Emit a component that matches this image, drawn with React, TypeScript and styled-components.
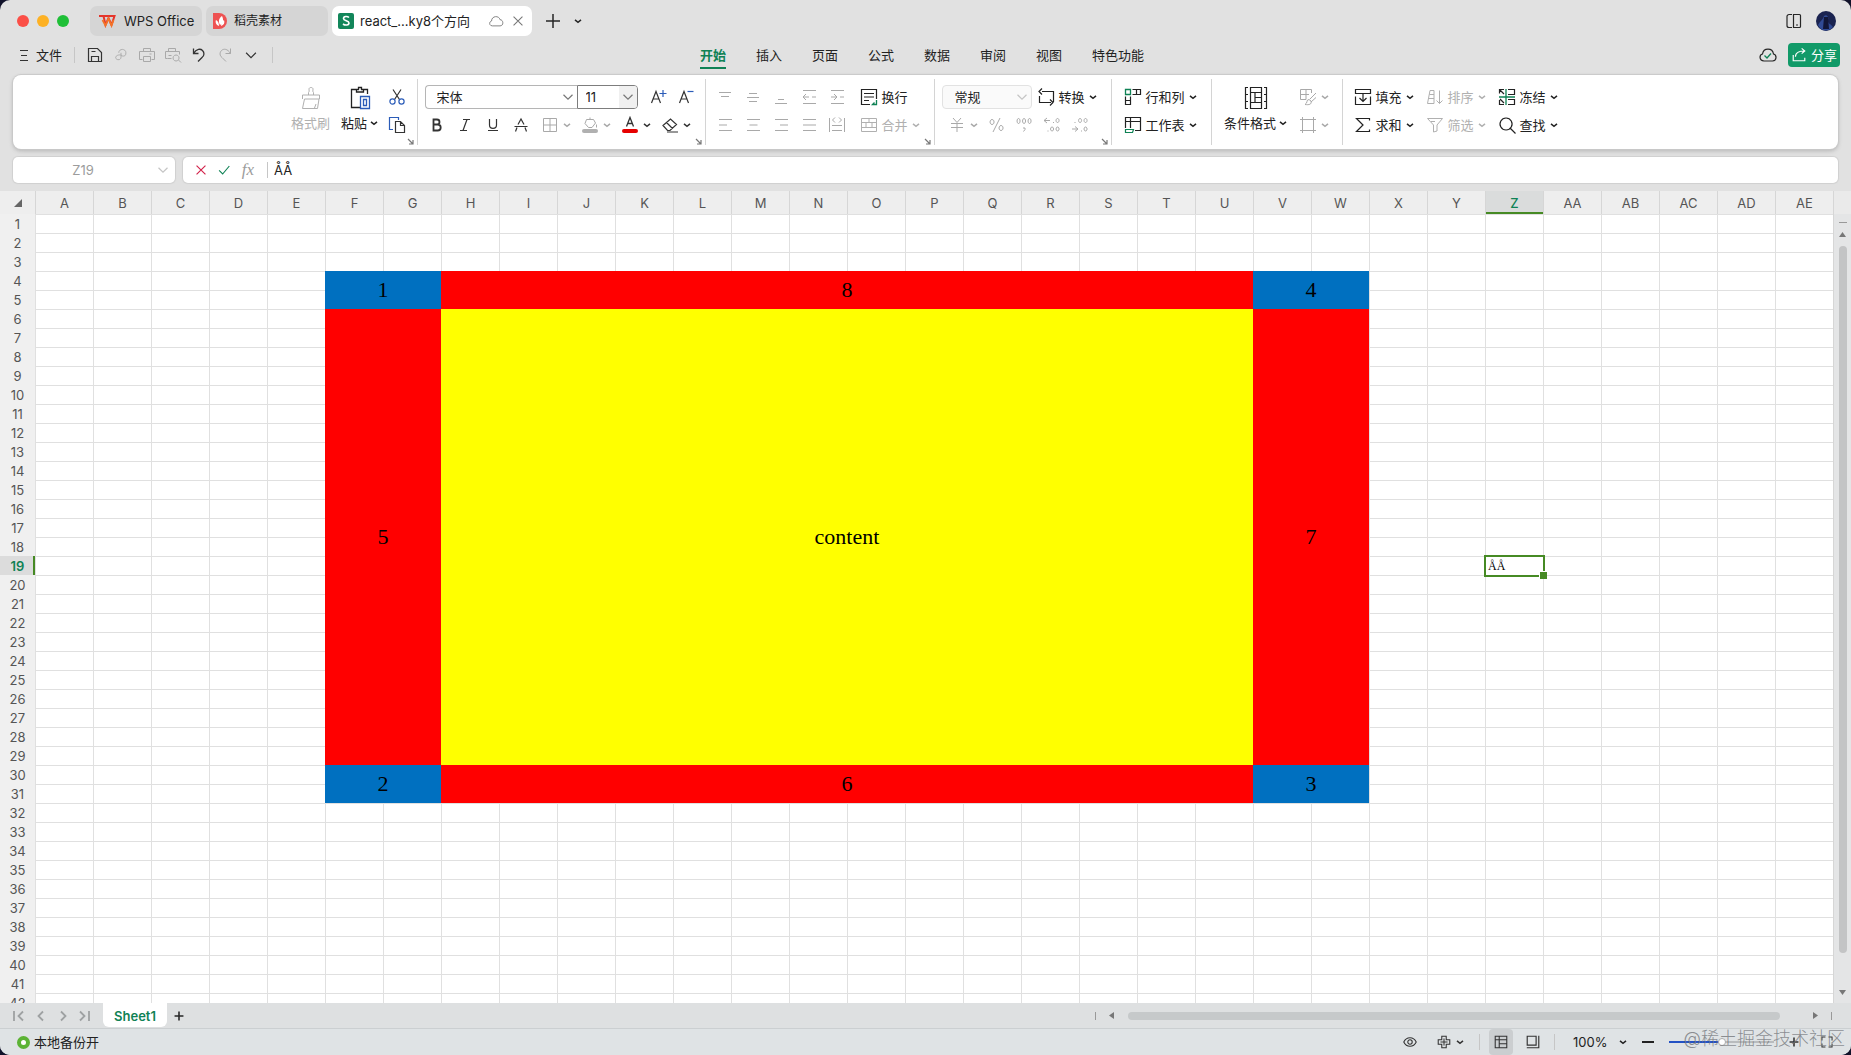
import React from "react";
import styled, { createGlobalStyle, css } from "styled-components";

const GlobalStyle = createGlobalStyle`
  * { box-sizing: border-box; }
  body {
    margin: 0;
    background: #11122a;
    color: #262626;
    font-family: Inter, "Noto Sans CJK SC", sans-serif;
    font-size: 13px;
    line-height: 18px;
  }
  button, input, select { font: inherit; color: inherit; margin: 0; }
  button { border: 0; padding: 0; background: none; }
`;

const green = "#0f8255";
const muted = "#a9a9a9";
const blue = "#2b5cb8";

/* ---------- icons ---------- */

const Svg = styled.svg<{ $size?: number }>`
  width: ${(p) => p.$size ?? 18}px;
  height: ${(p) => p.$size ?? 18}px;
  flex: none;
  fill: none;
  stroke: currentColor;
  stroke-width: 1;
`;

const shapes: Record<string, React.ReactNode> = {
  save: <path d="M2.5 2.5h9l4 4v9h-13zM5.5 15.5v-5h7v5M5.5 5.5h4" strokeWidth="1.2" />,
  link: <path d="M6.500 6.500c0-5 8-5 8 0s-3.500 3.500-5 3.500M10 9.500c-3-1.500-7 0-7 2.500s6 4 6-1V6.500" />,
  print: <path d="M5.500 5V2.500h7V5M4.500 13.500h-3v-8h15v8h-3M5.500 10.500h7v5h-7zM11.500 8h2" />,
  preview: <path d="M4.500 5V2.500h7V5M3.500 12.500h-2v-7h14v3M3.500 12.500h4M4.500 9.500h3M12 15a3 3 0 1 1 .1 0zM14.300 13.800l2.700 2.700" />,
  undo: <path d="M3.500 2.500v5h5M3.500 7.500c3-5 7-5 9-3s2 5-.5 7L8 15.500" strokeWidth="1.300" />,
  redo: <path d="M14.500 2.500v5h-5M14.500 7.500c-3-5-7-5-9-3s-2 5 .5 7L10 15.500" />,
  down: <path d="M3.500 6.500L9 12l5.500-5.500" strokeWidth="1.300" />,
  brush: <path d="M9.500 9V6.500c1-.5.500-2.500.500-3.500 0-2 4-2 4 0 0 1-.5 3 .5 3.500V9M3.500 13V9h17v4M5.500 13L3.500 22.500h15l1.500-9.500zM15.500 22l1.500-4" />,
  paste: (
    <>
      <path d="M8 3.500H3.500v18H12M15 3.500h4.500V8M8.500 6V3.500h2V1.500h3v2h2V6z" strokeWidth="1.300" />
      <path d="M12.500 10.500h9v12h-9zM15.500 13.500h3v6h-3z" stroke={blue} strokeWidth="1.300" />
    </>
  ),
  cut: (
    <>
      <path d="M5 1.500l6.800 10.500M13 1.500L6.200 12" strokeWidth="1.200" />
      <circle cx="4.500" cy="13.500" r="2.600" stroke={blue} strokeWidth="1.200" />
      <circle cx="13.500" cy="13.500" r="2.600" stroke={blue} strokeWidth="1.200" />
    </>
  ),
  copy: (
    <>
      <path d="M5 13.500H1.500v-12h9V4" stroke={blue} strokeWidth="1.200" />
      <path d="M7.500 5.500h5l4 4v7h-9zM12.500 5.500v4h4" strokeWidth="1.200" />
    </>
  ),
  grow: (
    <>
      <path d="M2.500 15L7 3.500 11.500 15M4 11h6" strokeWidth="1.200" />
      <path d="M14 2v7M10.500 5.500h7" stroke={blue} strokeWidth="1.200" />
    </>
  ),
  shrink: (
    <>
      <path d="M2.500 15L7 3.500 11.500 15M4 11h6" strokeWidth="1.200" />
      <path d="M10.500 3.500h6" stroke={blue} strokeWidth="1.200" />
    </>
  ),
  bold: <path d="M5.500 3.500v11h4.200a3 3 0 0 0 0-6H5.500 9a2.500 2.500 0 0 0 0-5z" strokeWidth="1.800" />,
  italic: <path d="M7 3.500h7M4 14.500h7M11 3.500l-4 11" strokeWidth="1.200" />,
  underline: <path d="M5.500 3v6c0 4.500 7 4.500 7 0V3M4 14.500h10" strokeWidth="1.200" />,
  strike: <path d="M6 8.500L9 3l3 5.500M2.500 10.500h13M5 11.500l-1.500 4M13 11.500l1.500 4" strokeWidth="1.200" />,
  border: <path d="M2.500 2.500h13v13h-13zM9 2.500v13M2.500 9h13" />,
  fill: (
    <>
      <path d="M5.500 3.500h7l2 3.500-3.500 4.500H7.500L4 7.500zM9 3.500V1.500M15.500 8.500v3" />
      <rect x="1" y="13" width="16" height="4" rx="2" fill="#b0b0b0" stroke="none" />
    </>
  ),
  color: (
    <>
      <path d="M5.500 10.500L9 1.500l3.500 9M6.800 7.500h4.400" strokeWidth="1.300" />
      <rect x="1" y="13" width="16" height="4" rx="2" fill="#e60000" stroke="none" />
    </>
  ),
  eraser: <path d="M2 9.500l7.500-6.500 6 5.500-6.500 6H6.500zM5.500 6.500l6 6M6 16h11" strokeWidth="1.200" />,
  top: <path d="M3 4.500h12M5 8.500h8" />,
  middle: <path d="M5 5.500h8M3 9.500h12M5 13.500h8" />,
  bottom: <path d="M6 11.500h6M3 15.500h12" />,
  outdent: <path d="M3 2.500h13M3 15.500h13M3 9h6M6 6L3 9l3 3M12 9h4" />,
  indent: <path d="M3 2.500h13M3 15.500h13M3 9h6M6 6l3 3-3 3M12 9h4" />,
  left: <path d="M3 3.500h13M3 9h8M3 14.500h13" />,
  center: <path d="M3 3.500h13M5.500 9h8M3 14.500h13" />,
  right: <path d="M3 3.500h13M8 9h8M3 14.500h13" />,
  justify: <path d="M3 3.500h13M3 9h13M3 14.500h13" />,
  spread: <path d="M1.500 2v14M16.500 2v14M4 9.500h10M4 14.500h10M7 1.500L4.500 4 7 6.500M11 1.500L13.500 4 11 6.500" />,
  wrap: (
    <>
      <path d="M10 16.500H1.500v-15h15V11M4 5.500h10M4 9h10M4 12.500h5" strokeWidth="1.200" />
      <path d="M16.500 12v4.500h-4l2-2" stroke={green} strokeWidth="1.300" />
    </>
  ),
  merge: <path d="M1.500 2.500h15v13h-15zM1.500 6.500h15M9 2.500v4M6 6.500v5M12 6.500v5M1.500 11.500h15" />,
  convert: <path d="M5 3.500h11.500V14M5 .5l-3 3 3 3M14 14.500H2.500V8M13 11.500l3 3-3 3" strokeWidth="1.200" />,
  yen: <path d="M5 2l4 4.500L13 2M3 7.500h12M3 11.500h12M9 7v9" />,
  percent: <path d="M13 2L6 16M5 3.500a2 2.500 0 1 0 .1 0zM14 9.500a2 2.500 0 1 0 .1 0z" />,
  comma: <path d="M3.500 2.500a1.500 2.500 0 1 0 .1 0zM9 2.500a1.500 2.500 0 1 0 .1 0zM14.500 2.500a1.500 2.500 0 1 0 .1 0zM8 12h2v1.500L8.500 15.500" />,
  moreDec: <path d="M1 4.500h6M4 2L1 4.500 4 7M10 6.500h1M14.500 2.500a1.500 2 0 1 0 .1 0zM4.500 15h1M9 11a1.500 2 0 1 0 .1 0zM14.500 11a1.500 2 0 1 0 .1 0z" />,
  lessDec: <path d="M3.500 6.500h1M9 2.500a1.500 2 0 1 0 .1 0zM14.500 2.500a1.500 2 0 1 0 .1 0zM1 13h6M4 10.500L7 13l-3 2.500M10 15h1M14.500 11a1.500 2 0 1 0 .1 0z" />,
  rows: (
    <>
      <path d="M8.500 1.500h8v5h-8M12.500 1.500v5M1.500 8.500v8h5v-8M1.500 12.500h5" strokeWidth="1.200" />
      <path d="M1.500 1.500h5v5h-5z" stroke={green} strokeWidth="1.300" />
    </>
  ),
  sheet: (
    <>
      <path d="M1.500 12V1.500h15v13H11M1.500 5.500h15M6.500 1.500V12" strokeWidth="1.200" />
      <path d="M1.500 13.500h8l-1 3h-7z" stroke={green} strokeWidth="1.200" />
    </>
  ),
  cond: <path d="M4 1.500H1.500v21H4M20 1.500h2.500v21H20M1.500 8.500H4M1.500 15.500H4M20 8.500h2.500M20 15.500h2.500M6.500 1.500h11v5h-11zM6.500 6.500v10h11v-10M6.500 16.500v6h11v-6M11 6.500v10M11 11.500h6.500" strokeWidth="1.200" />,
  style: <path d="M7 11.500H1.500v-10h11V5M1.500 6.500H10M7 1.500v10M17 5l-6 6M17 9.500L12 14M10 11.500c-3 0-1 3.500-4 5 4 .5 7 0 6-3.500z" />,
  frame: <path d="M3.500 1v16M14.500 1v16M1 3.500h16M1 14.500h16" />,
  fillDown: <path d="M1.500 1.500h15v4h-15zM1.500 8.500v8h15v-8M9 5.500v8M5.500 10L9 13.500l3.500-3.500" strokeWidth="1.200" />,
  sum: <path d="M15.500 4.500v-2H2.500L9 9l-6.500 6.500h13v-2" strokeWidth="1.200" />,
  sort: <path d="M1.500 15.500L4 2.500h4v13zM3 10.500h5M3.500 6.500H8M13.500 2.500v13M10.500 12.500l3 3 3-3" />,
  filter: <path d="M1.500 2.500h15L11 9v6l-3.500 1V9zM5 5.500h4" />,
  freeze: (
    <>
      <path d="M6 1.500H1.500v4M1.500 12v4.500H6M10 1.500h6.500v5H10M10 11.500h6.500v5H10M2 2l4 4M2 11l4 4" strokeWidth="1.200" />
      <path d="M8 1v16M1 9h16" stroke={green} strokeWidth="1.300" />
    </>
  ),
  search: <path d="M8 2a6 6 0 1 0 .1 0zM12.500 12.500l5 5" strokeWidth="1.200" />,
  cloud: <path d="M5 14.500c-4 0-4-5-1-5.500 0-6 8.500-6.500 9.500-1.500 4 0 4.500 7 0 7z" />,
  close: <path d="M4 4l10 10M14 4L4 14" strokeWidth="1.200" />,
  plus: <path d="M9 2v14M2 9h14" strokeWidth="1.500" />,
  plusBold: <path d="M9 1v16M1 9h16" strokeWidth="2.800" />,
  cloudOk: (
    <>
      <path d="M5 15c-5-.5-5-6-1.500-7 1-6.500 10-6.500 11 0 3.500 1 3.500 6.500-1 7z" strokeWidth="1.200" />
      <path d="M5.500 9.500L8 12l4-4.500" stroke={green} strokeWidth="1.300" />
    </>
  ),
  share: <path d="M2.500 9v6.500h13V12M5 11c0-5 5-6.500 10-6.500M12 1.500l3.500 3-3.500 3" strokeWidth="1.300" />,
  panel: <path d="M7 2.500H4a2 2 0 0 0-2 2v9a2 2 0 0 0 2 2h3M8.500 2.500h6a1 1 0 0 1 1 1v11a1 1 0 0 1-1 1h-6zM11 13h2" strokeWidth="1.200" />,
  check: <path d="M3.500 9.500l4 4 7.500-9" stroke={green} strokeWidth="1.300" />,
  cancel: <path d="M4 4l10 10M14 4L4 14" stroke="#d2224a" strokeWidth="1.300" />,
  launch: <path d="M2 2l5 5M7 3v4H3" strokeWidth="1.200" />,
  eye: (
    <>
      <path d="M2 9c3-6.500 11-6.500 14 0-3 6.500-11 6.500-14 0z" strokeWidth="1.200" />
      <circle cx="9" cy="9" r="2.500" strokeWidth="1.200" />
    </>
  ),
  move: <path d="M6.500 6.500v-4h5v4h4v5h-4v4h-5v-4h-4v-5zM9 5v8M5 9h8" strokeWidth="1.200" />,
  normal: <path d="M2.500 2.500h13v13h-13zM2.500 6.500h13M7 2.500v13M7 11h8.500" strokeWidth="1.200" />,
  page: <path d="M2.500 2.500h10v10h-10zM15.500 2v13.500H2" strokeWidth="1.300" />,
  expand: <path d="M2.500 7V2.500H7M11 15.500h4.500V11M15.500 7V2.500H11M2.500 11v4.500H7" strokeWidth="1.300" />,
  first: <path d="M4 4v10M13 4.500L8.500 9l4.500 4.500" strokeWidth="1.800" />,
  prev: <path d="M11 4.500L6.500 9l4.500 4.500" strokeWidth="1.800" />,
  next: <path d="M7 4.500L11.500 9 7 13.500" strokeWidth="1.800" />,
  last: <path d="M4 4.500L8.500 9 4 13.500M13 4v10" strokeWidth="1.800" />,
};

function Icon({ name, size = 18, box = 18 }: { name: string; size?: number; box?: number }) {
  return (
    <Svg $size={size} viewBox={`0 0 ${box} ${box}`} aria-hidden="true">
      {shapes[name]}
    </Svg>
  );
}

function Caret({ wide }: { wide?: boolean }) {
  return (
    <Svg $size={wide ? 12 : 8} viewBox="0 0 8 8" aria-hidden="true">
      <path d={wide ? "M1 2.500L4 5.500l3-3" : "M1 2.800L4 5.300l3-2.500"} strokeWidth={wide ? 0.8 : 1.5} />
    </Svg>
  );
}

/* ---------- window ---------- */

const Window = styled.div`
  display: flex;
  flex-direction: column;
  height: 100vh;
  overflow: hidden;
  border-radius: 10px;
  background: #e1e1e1;
`;

const TitleBar = styled.header`
  display: flex;
  align-items: center;
  height: 36px;
  padding: 6px 15px 0 17px;
`;

const Lights = styled.div`
  display: flex;
  gap: 8px;
  width: 73px;
`;

const Light = styled.span<{ $color: string }>`
  width: 12px;
  height: 12px;
  border-radius: 50%;
  background: ${(p) => p.$color};
`;

const DocTabs = styled.nav`
  display: flex;
  flex: 1;
  align-items: center;
  gap: 4px;
`;

const DocTab = styled.button<{ $active?: boolean; $small?: boolean; $width: number }>`
  display: flex;
  align-items: center;
  gap: 6px;
  width: ${(p) => p.$width}px;
  height: 30px;
  padding: 0 6px;
  border-radius: 7px;
  background: ${(p) => (p.$active ? "#fff" : "#d5d5d5")};
  white-space: nowrap;
  font-size: ${(p) => (p.$small ? 12 : 13)}px;
  color: #222;
`;

const TabTools = styled.span`
  display: flex;
  flex: 1;
  justify-content: flex-end;
  gap: 6px;
  color: #777;
`;

const PlainButton = styled.button<{ $width?: number }>`
  display: flex;
  align-items: center;
  justify-content: center;
  gap: 4px;
  width: ${(p) => p.$width ?? 26}px;
  height: 26px;
`;

const Avatar = styled.svg`
  width: 20px;
  height: 20px;
  margin-left: 13px;
`;

const MenuBar = styled.div`
  display: grid;
  grid-template-columns: 1fr auto 1fr;
  align-items: center;
  height: 39px;
  padding: 0 11px 2px 4px;
`;

const QuickTools = styled.div`
  display: flex;
  align-items: center;
  color: #333;
`;

const FileButton = styled.button`
  display: flex;
  align-items: center;
  gap: 8px;
  height: 26px;
  padding: 0 12px 0 16px;
  color: #222;
`;

const Rule = styled.span<{ $gap?: number }>`
  width: 1px;
  height: 16px;
  margin: 0 ${(p) => p.$gap ?? 8}px;
  background: #c6c6c6;
`;

const QuickSet = styled.div`
  display: flex;
  padding: 0 8px 0 7px;
`;

const QuickButton = styled(PlainButton)<{ $off?: boolean }>`
  color: ${(p) => (p.$off ? muted : "#333")};
`;

const MenuTabs = styled.nav`
  display: flex;
  gap: 30px;
`;

const MenuTab = styled.button<{ $active?: boolean }>`
  height: 28px;
  color: #222;
  ${(p) =>
    p.$active &&
    css`
      color: ${green};
      font-weight: 700;
      box-shadow: inset 0 -2px ${green};
    `}
`;

const MenuEnd = styled.div`
  display: flex;
  align-items: center;
  justify-content: flex-end;
  gap: 11px;
`;

const ShareButton = styled.button`
  display: flex;
  align-items: center;
  gap: 4px;
  height: 24px;
  padding: 0 3px;
  border-radius: 4px;
  background: #119a68;
  color: #fff;
`;

/* ---------- ribbon ---------- */

const Ribbon = styled.section`
  display: flex;
  justify-content: center;
  height: 74px;
  margin: 0 13px;
  padding: 4px 0;
  border-radius: 8px;
  background: #fff;
  box-shadow: 0 0 1px 1px #c9c9c9, 0 2px 4px #b5b5b5;
`;

const Group = styled.div<{ $width: number; $pad: number; $last?: boolean }>`
  position: relative;
  display: flex;
  flex: none;
  width: ${(p) => p.$width}px;
  padding-left: ${(p) => p.$pad}px;
  border-right: ${(p) => (p.$last ? "0" : "1px solid #d4d4d4")};
`;

const Launcher = styled.button`
  position: absolute;
  right: 3px;
  bottom: 0;
  display: flex;
  color: #777;
`;

const Stack = styled.div<{ $indent?: number }>`
  display: flex;
  flex-direction: column;
  padding: 4px 0 0 ${(p) => p.$indent ?? 0}px;
`;

const Row = styled.div<{ $gap?: number; $indent?: number }>`
  display: flex;
  align-items: center;
  gap: ${(p) => p.$gap ?? 0}px;
  height: 28px;
  padding-left: ${(p) => p.$indent ?? 0}px;
`;

const Tool = styled.button<{ $off?: boolean; $menu?: boolean }>`
  display: flex;
  align-items: center;
  justify-content: ${(p) => (p.$menu ? "flex-start" : "center")};
  gap: 4px;
  width: ${(p) => (p.$menu ? 40 : 28)}px;
  height: 28px;
  padding-left: ${(p) => (p.$menu ? 6 : 0)}px;
  color: ${(p) => (p.$off ? muted : "#333")};
`;

const LabelTool = styled.button<{ $off?: boolean }>`
  display: flex;
  align-items: center;
  gap: 4px;
  height: 28px;
  white-space: nowrap;
  color: ${(p) => (p.$off ? "#b0b0b0" : "#222")};
`;

const BigTool = styled.button<{ $off?: boolean; $width: number }>`
  display: flex;
  flex-direction: column;
  align-items: center;
  gap: 4px;
  width: ${(p) => p.$width}px;
  padding-top: 7px;
  color: ${(p) => (p.$off ? "#b0b0b0" : "#222")};
  & + & { margin-left: 7px; }
`;

const BigLabel = styled.span`
  display: flex;
  align-items: center;
  gap: 3px;
  white-space: nowrap;
`;

const Field = styled.label<{ $width: number; $kind?: "font" | "size" | "format" }>`
  display: flex;
  align-items: center;
  width: ${(p) => p.$width}px;
  height: 24px;
  border: 1px solid #b5b5b5;
  border-radius: 4px;
  overflow: hidden;
  color: #777;
  ${(p) => p.$kind === "font" && css`border-radius: 4px 0 0 4px;border-right: 0;`}
  ${(p) => p.$kind === "size" && css`border-color: #7d7d7d;border-radius: 0 4px 4px 0;`}
  ${(p) => p.$kind === "format" && css`border-color: #e2e2e2;background: #fafafa;color: #c5c5c5;`}
`;

const Select = styled.select<{ $pad: number }>`
  appearance: none;
  flex: 1;
  min-width: 0;
  height: 22px;
  padding: 0 0 0 ${(p) => p.$pad}px;
  border: 0;
  background: none;
  color: #222;
`;

const CaretBox = styled.span<{ $shade?: boolean }>`
  display: flex;
  align-items: center;
  justify-content: center;
  width: 18px;
  height: 22px;
  background: ${(p) => (p.$shade ? "#f0f0f0" : "transparent")};
`;

/* ---------- formula bar ---------- */

const FormulaRow = styled.div`
  display: flex;
  gap: 8px;
  height: 26px;
  margin: 8px 13px;
`;

const Box = styled.div<{ $width?: number }>`
  display: flex;
  align-items: center;
  ${(p) => (p.$width ? css`width: ${p.$width}px;` : css`flex: 1;`)}
  padding: 0 6px;
  border-radius: 5px;
  background: #fff;
  box-shadow: 0 0 1px 1px #d0d0d0;
  color: #c5c5c5;
`;

const BoxInput = styled.input<{ $center?: boolean }>`
  flex: 1;
  min-width: 0;
  padding: 0 ${(p) => (p.$center ? 10 : 0)}px 0 0;
  border: 0;
  outline: 0;
  background: none;
  text-align: ${(p) => (p.$center ? "center" : "left")};
  color: ${(p) => (p.$center ? "#9c9c9c" : "#222")};
`;

const Fx = styled.button`
  width: 26px;
  font: italic 17px/20px "Liberation Serif", serif;
  color: #9c9c9c;
`;

/* ---------- grid ---------- */

const SheetArea = styled.main`
  display: flex;
  flex: 1;
  min-height: 0;
  background: #fff;
`;

const GridView = styled.div`
  flex: 1;
  min-width: 0;
  overflow: hidden;
`;

const Grid = styled.table`
  width: 100%;
  table-layout: fixed;
  border-collapse: separate;
  border-spacing: 0;
`;

const Col = styled.col<{ $width: number }>`
  width: ${(p) => p.$width}px;
`;

const ColHead = styled.th<{ $active?: boolean }>`
  height: 23px;
  padding: 0;
  border-left: 1px solid #d6d6d6;
  background: #eeeeee;
  font-weight: 400;
  color: #555;
  ${(p) =>
    p.$active &&
    css`
      background: #dadcdc;
      color: ${green};
      font-weight: 500;
      box-shadow: inset 0 -2px #468a24;
    `}
`;

const Corner = styled.th`
  height: 23px;
  padding: 0 0 0 14px;
  background: #eeeeee;
  text-align: left;
  line-height: 0;
`;

const RowHead = styled.th<{ $active?: boolean }>`
  height: 19px;
  padding: 0;
  background: #f0f0f0;
  font-weight: 400;
  line-height: 18px;
  color: #555;
  ${(p) =>
    p.$active &&
    css`
      background: #dcdcdc;
      color: ${green};
      font-weight: 600;
      box-shadow: inset -2px 0 #468a24;
    `}
`;

const Cell = styled.td`
  height: 19px;
  padding: 0;
  border-top: 1px solid #e0e0e0;
  border-left: 1px solid #e0e0e0;
`;

const Block = styled.td<{ $color: string }>`
  padding: 0;
  background: ${(p) => p.$color};
  font: 22px/24px "Liberation Serif", serif;
  text-align: center;
  color: #000;
`;

const ActiveCell = styled(Cell)`
  position: relative;
  padding-left: 2px;
  font: 12px/14px "Liberation Serif", serif;
  color: #000;
  &::before {
    content: "";
    position: absolute;
    inset: -2px;
    border: 2px solid #468a24;
  }
  &::after {
    content: "";
    position: absolute;
    right: -4px;
    bottom: -4px;
    width: 7px;
    height: 7px;
    border: solid #fff;
    border-width: 1px 0 0 1px;
    background: #468a24;
  }
`;

const VScroll = styled.div`
  display: flex;
  flex-direction: column;
  align-items: center;
  width: 18px;
  padding: 31px 0 3px;
  border-left: 1px solid #d6d6d6;
  background: linear-gradient(#eaeaea 23px, #e4e5e6 23px);
  color: #777;
`;

const VThumb = styled.span`
  flex: 1;
  width: 8px;
  margin: 4px 0 31px;
  border-radius: 4px;
  background: #c3c4c5;
`;

const Dash = styled.span<{ $vertical?: boolean }>`
  width: ${(p) => (p.$vertical ? 1 : 8)}px;
  height: ${(p) => (p.$vertical ? 8 : 1)}px;
  background: #999;
`;

const Minus = styled.span`
  width: 12px;
  height: 2px;
  background: #222;
`;

const ArrowButton = styled.button`
  display: flex;
  align-items: center;
  justify-content: center;
  width: 16px;
  height: 16px;
  color: #777;
  ${Dash} + & { margin-top: 3px; }
`;

const SideArrow = styled(ArrowButton)`
  && { margin-top: 0; }
`;

/* ---------- footer ---------- */

const SheetBar = styled.div`
  display: flex;
  align-items: center;
  height: 26px;
  background: #dee0e1;
  border-bottom: 1px solid #cbcfd1;
`;

const SheetNav = styled.div`
  display: flex;
  gap: 4px;
  padding: 0 9px 0 10px;
  color: #9ea1a2;
`;

const SheetTab = styled.button`
  align-self: flex-start;
  width: 64px;
  height: 24px;
  padding-top: 2px;
  border-radius: 0 0 6px 6px;
  background: #fff;
  font-weight: 600;
  color: ${green};
`;

const SheetSpacer = styled.div`
  flex: 38;
`;

const HScroll = styled.div`
  display: flex;
  flex: 31;
  align-items: center;
  gap: 8px;
  padding-right: 19px;
`;

const HThumb = styled.span`
  flex: 1;
  height: 8px;
  margin-right: 19px;
  border-radius: 4px;
  background: #c6c9ca;
`;

const StatusBar = styled.footer`
  display: flex;
  align-items: center;
  justify-content: space-between;
  height: 26px;
  padding: 0 11px 0 17px;
  background: #dfe3e5;
  color: #222;
`;

const StatusPart = styled.div<{ $gap: number }>`
  display: flex;
  align-items: center;
  gap: ${(p) => p.$gap}px;
  height: 26px;
`;

const BackupDot = styled.span`
  width: 13px;
  height: 13px;
  border: 4px solid #5cb335;
  border-radius: 50%;
  background: #fff;
`;

const ViewButton = styled(PlainButton)<{ $on?: boolean }>`
  border-radius: 4px;
  color: #333;
  background: ${(p) => (p.$on ? "#cbced0" : "transparent")};
`;

const ZoomLabel = styled.label`
  display: flex;
  align-items: center;
  width: 64px;
`;

const ZoomRange = styled.input`
  appearance: none;
  width: 105px;
  height: 8px;
  background: linear-gradient(90deg, #2351c4 50%, #b9bcbe 50%) center / 100% 2px no-repeat;
  &::-webkit-slider-thumb {
    appearance: none;
    width: 8px;
    height: 8px;
    border: 1px solid #aaa;
    border-radius: 50%;
    background: #fff;
  }
`;

const Watermark = styled.div`
  position: absolute;
  right: 6px;
  bottom: 4px;
  font-size: 18px;
  font-weight: 300;
  line-height: 24px;
  color: rgba(115, 118, 122, 0.8);
  pointer-events: none;
`;

/* ---------- data ---------- */

const COLUMNS = Array.from({ length: 31 }, (_, i) =>
  i < 26 ? String.fromCharCode(65 + i) : "A" + String.fromCharCode(39 + i),
);
const ROWS = Array.from({ length: 42 }, (_, i) => i + 1);
const MENUS = ["开始", "插入", "页面", "公式", "数据", "审阅", "视图", "特色功能"];

const BLUE = "#0070c0";
const RED = "#ff0000";
const YELLOW = "#ffff00";

type Merge = { row: number; col: number; rows: number; cols: number; color: string; text: string };

const MERGES: Merge[] = [
  { row: 4, col: 5, rows: 2, cols: 2, color: BLUE, text: "1" },
  { row: 4, col: 7, rows: 2, cols: 14, color: RED, text: "8" },
  { row: 4, col: 21, rows: 2, cols: 2, color: BLUE, text: "4" },
  { row: 6, col: 5, rows: 24, cols: 2, color: RED, text: "5" },
  { row: 6, col: 7, rows: 24, cols: 14, color: YELLOW, text: "content" },
  { row: 6, col: 21, rows: 24, cols: 2, color: RED, text: "7" },
  { row: 30, col: 5, rows: 2, cols: 2, color: BLUE, text: "2" },
  { row: 30, col: 7, rows: 2, cols: 14, color: RED, text: "6" },
  { row: 30, col: 21, rows: 2, cols: 2, color: BLUE, text: "3" },
];

function GridCell({ row, col }: { row: number; col: number }) {
  const merge = MERGES.find(
    (m) => row >= m.row && row < m.row + m.rows && col >= m.col && col < m.col + m.cols,
  );
  if (merge) {
    if (merge.row !== row || merge.col !== col) return null;
    return (
      <Block $color={merge.color} rowSpan={merge.rows} colSpan={merge.cols}>
        {merge.text}
      </Block>
    );
  }
  if (row === 19 && col === 25) return <ActiveCell>ÅÅ</ActiveCell>;
  return <Cell />;
}

function Spreadsheet() {
  return (
    <Grid>
      <colgroup>
        <Col $width={35} />
        {COLUMNS.map((c) => (
          <Col key={c} $width={58} />
        ))}
      </colgroup>
      <thead>
        <tr>
          <Corner>
            <svg width="8" height="8" viewBox="0 0 8 8" aria-hidden="true">
              <path d="M8 0v8H0z" fill="#666" />
            </svg>
          </Corner>
          {COLUMNS.map((c) => (
            <ColHead key={c} scope="col" $active={c === "Z"}>
              {c}
            </ColHead>
          ))}
        </tr>
      </thead>
      <tbody>
        {ROWS.map((r) => (
          <tr key={r}>
            <RowHead scope="row" $active={r === 19}>
              {r}
            </RowHead>
            {COLUMNS.map((c, i) => (
              <GridCell key={c} row={r} col={i} />
            ))}
          </tr>
        ))}
      </tbody>
    </Grid>
  );
}

function ToolButton({ icon, label, off, menu }: { icon: string; label: string; off?: boolean; menu?: boolean }) {
  return (
    <Tool aria-label={label} $off={off} $menu={menu}>
      <Icon name={icon} />
      {menu && <Caret />}
    </Tool>
  );
}

function TextTool({ icon, children, off, menu = true }: { icon: string; children: string; off?: boolean; menu?: boolean }) {
  return (
    <LabelTool $off={off}>
      <Icon name={icon} />
      <span>{children}</span>
      {menu && <Caret />}
    </LabelTool>
  );
}

function Launch() {
  return (
    <Launcher aria-label="更多设置">
      <Icon name="launch" size={8} box={8} />
    </Launcher>
  );
}

function Triangle({ d }: { d: string }) {
  return (
    <svg width="7" height="7" viewBox="0 0 7 7" aria-hidden="true">
      <path d={d} fill="currentColor" />
    </svg>
  );
}

export default function App() {
  return (
    <Window>
      <GlobalStyle />
      <TitleBar>
        <Lights>
          <Light $color="#fb4f47" />
          <Light $color="#fdb124" />
          <Light $color="#1fbf37" />
        </Lights>
        <DocTabs>
          <DocTab $width={112}>
            <svg width="22" height="16" viewBox="0 0 22 16" aria-hidden="true">
              <path d="M3 3h4.500l2 9 3-7 3 7 3-9H8" fill="none" stroke="#e5352b" strokeWidth="2" />
              <path d="M6.500 7l3 5.500 3-7 3 7 2-5.500" fill="none" stroke="#f37428" strokeWidth="1.800" />
            </svg>
            WPS Office
          </DocTab>
          <DocTab $width={122} $small>
            <svg width="16" height="18" viewBox="0 0 16 18" aria-hidden="true">
              <path d="M1 1h6a8 8 0 0 1 0 16H1z" fill="#ee5252" />
              <path d="M7 14c-3-1-4-4-3-6 2 1 3 3 3 6zM8 13c-2-4-1-7 2-9 2 4 1 7-2 9zM9 14c0-3 1-5 3-6 1 3 0 5-3 6z" fill="#fff" />
            </svg>
            稻壳素材
          </DocTab>
          <DocTab $width={200} $active>
            <svg width="16" height="16" viewBox="0 0 16 16" aria-hidden="true">
              <rect width="16" height="16" rx="2" fill="#12865a" />
              <path d="M11 4.500C9.500 3 5.500 3 5.500 5.500s5.500 2 5.500 4.500-4 2.500-6 1" fill="none" stroke="#fff" strokeWidth="1.600" />
            </svg>
            react_...ky8个方向
            <TabTools>
              <Icon name="cloud" size={16} />
              <Icon name="close" size={16} />
            </TabTools>
          </DocTab>
          <PlainButton aria-label="新建" $width={34}>
            <Icon name="plus" />
          </PlainButton>
          <Caret />
        </DocTabs>
        <Icon name="panel" />
        <Avatar viewBox="0 0 20 20" aria-hidden="true">
          <circle cx="10" cy="10" r="10" fill="#1a2350" />
          <path d="M2 14c2-4 5-5 6-9 3-2 5 1 4 4s3 4 5 7c-4 5-12 5-15-2z" fill="#304a94" />
          <path d="M8 6h4l1 12H7z" fill="#111638" />
        </Avatar>
      </TitleBar>

      <MenuBar>
        <QuickTools>
          <FileButton>
            <svg width="8" height="12" viewBox="0 0 8 12" stroke="#333" aria-hidden="true">
              <path d="M0 1.500h8M1 6.500h6M0 11.500h8" />
            </svg>
            文件
          </FileButton>
          <Rule $gap={0} />
          <QuickSet>
            <QuickButton aria-label="保存"><Icon name="save" /></QuickButton>
            <QuickButton aria-label="链接" $off><Icon name="link" size={16} /></QuickButton>
            <QuickButton aria-label="打印" $off><Icon name="print" /></QuickButton>
            <QuickButton aria-label="打印预览" $off><Icon name="preview" /></QuickButton>
            <QuickButton aria-label="撤销"><Icon name="undo" /></QuickButton>
            <QuickButton aria-label="恢复" $off><Icon name="redo" /></QuickButton>
            <QuickButton aria-label="更多"><Icon name="down" size={16} /></QuickButton>
          </QuickSet>
          <Rule $gap={0} />
        </QuickTools>
        <MenuTabs>
          {MENUS.map((m, i) => (
            <MenuTab key={m} $active={i === 0}>
              {m}
            </MenuTab>
          ))}
        </MenuTabs>
        <MenuEnd>
          <Icon name="cloudOk" />
          <ShareButton>
            <Icon name="share" size={16} />
            分享
          </ShareButton>
        </MenuEnd>
      </MenuBar>

      <Ribbon>
        <Group $width={126} $pad={0}>
          <BigTool $off $width={38}>
            <Icon name="brush" size={24} box={24} />
            <BigLabel>格式刷</BigLabel>
          </BigTool>
          <BigTool $width={46}>
            <Icon name="paste" size={24} box={24} />
            <BigLabel>粘贴<Caret /></BigLabel>
          </BigTool>
          <Stack>
            <ToolButton icon="cut" label="剪切" />
            <ToolButton icon="copy" label="复制" />
          </Stack>
          <Launch />
        </Group>

        <Group $width={288} $pad={5}>
          <Stack>
            <Row $indent={2}>
              <Field $width={152} $kind="font">
                <Select aria-label="字体" $pad={11}><option>宋体</option></Select>
                <CaretBox><Caret wide /></CaretBox>
              </Field>
              <Field $width={61} $kind="size">
                <Select aria-label="字号" $pad={8}><option>11</option></Select>
                <CaretBox $shade><Caret wide /></CaretBox>
              </Field>
              <Row $indent={6}>
                <ToolButton icon="grow" label="增大字号" />
                <ToolButton icon="shrink" label="减小字号" />
              </Row>
            </Row>
            <Row>
              <ToolButton icon="bold" label="加粗" />
              <ToolButton icon="italic" label="倾斜" />
              <ToolButton icon="underline" label="下划线" />
              <ToolButton icon="strike" label="删除线" />
              <ToolButton icon="border" label="边框" menu off />
              <ToolButton icon="fill" label="填充颜色" menu off />
              <ToolButton icon="color" label="字体颜色" menu />
              <ToolButton icon="eraser" label="清除" menu />
            </Row>
          </Stack>
          <Launch />
        </Group>

        <Group $width={229} $pad={5}>
          <Stack>
            <Row>
              <ToolButton icon="top" label="顶端对齐" off />
              <ToolButton icon="middle" label="垂直居中" off />
              <ToolButton icon="bottom" label="底端对齐" off />
              <ToolButton icon="outdent" label="减少缩进" off />
              <ToolButton icon="indent" label="增加缩进" off />
            </Row>
            <Row>
              <ToolButton icon="left" label="左对齐" off />
              <ToolButton icon="center" label="居中" off />
              <ToolButton icon="right" label="右对齐" off />
              <ToolButton icon="justify" label="两端对齐" off />
              <ToolButton icon="spread" label="分散对齐" off />
            </Row>
          </Stack>
          <Stack $indent={9}>
            <TextTool icon="wrap" menu={false}>换行</TextTool>
            <TextTool icon="merge" off>合并</TextTool>
          </Stack>
          <Launch />
        </Group>

        <Group $width={177} $pad={7}>
          <Stack>
            <Row $gap={5}>
              <Field $width={90} $kind="format">
                <Select aria-label="数字格式" $pad={12}><option>常规</option></Select>
                <CaretBox><Caret wide /></CaretBox>
              </Field>
              <TextTool icon="convert">转换</TextTool>
            </Row>
            <Row>
              <ToolButton icon="yen" label="货币" menu off />
              <ToolButton icon="percent" label="百分比" off />
              <ToolButton icon="comma" label="千位分隔" off />
              <ToolButton icon="moreDec" label="增加小数位" off />
              <ToolButton icon="lessDec" label="减少小数位" off />
            </Row>
          </Stack>
          <Launch />
        </Group>

        <Group $width={100} $pad={12}>
          <Stack>
            <TextTool icon="rows">行和列</TextTool>
            <TextTool icon="sheet">工作表</TextTool>
          </Stack>
        </Group>

        <Group $width={131} $pad={11}>
          <BigTool $width={66}>
            <Icon name="cond" size={24} box={24} />
            <BigLabel>条件格式<Caret /></BigLabel>
          </BigTool>
          <Stack $indent={4}>
            <ToolButton icon="style" label="单元格样式" menu off />
            <ToolButton icon="frame" label="表格样式" menu off />
          </Stack>
        </Group>

        <Group $width={217} $pad={11} $last>
          <Stack>
            <Row $gap={12}>
              <TextTool icon="fillDown">填充</TextTool>
              <TextTool icon="sort" off>排序</TextTool>
              <TextTool icon="freeze">冻结</TextTool>
            </Row>
            <Row $gap={12}>
              <TextTool icon="sum">求和</TextTool>
              <TextTool icon="filter" off>筛选</TextTool>
              <TextTool icon="search">查找</TextTool>
            </Row>
          </Stack>
        </Group>
      </Ribbon>

      <FormulaRow>
        <Box $width={162}>
          <BoxInput aria-label="名称框" defaultValue="Z19" $center />
          <Caret wide />
        </Box>
        <Box>
          <PlainButton aria-label="取消" $width={24}><Icon name="cancel" size={16} /></PlainButton>
          <PlainButton aria-label="确认" $width={22}><Icon name="check" size={16} /></PlainButton>
          <Fx aria-label="插入函数">fx</Fx>
          <Rule $gap={6} />
          <BoxInput aria-label="编辑栏" defaultValue="ÅÅ" />
        </Box>
      </FormulaRow>

      <SheetArea>
        <GridView>
          <Spreadsheet />
        </GridView>
        <VScroll>
          <Dash />
          <ArrowButton aria-label="向上滚动"><Triangle d="M0 6L3.500 1 7 6z" /></ArrowButton>
          <VThumb />
          <ArrowButton aria-label="向下滚动"><Triangle d="M0 1L3.500 6 7 1z" /></ArrowButton>
        </VScroll>
      </SheetArea>

      <SheetBar>
        <SheetNav>
          <Icon name="first" />
          <Icon name="prev" />
          <Icon name="next" />
          <Icon name="last" />
        </SheetNav>
        <SheetTab>Sheet1</SheetTab>
        <PlainButton aria-label="新建工作表" $width={24}><Icon name="plusBold" size={10} /></PlainButton>
        <SheetSpacer />
        <HScroll>
          <Dash $vertical />
          <SideArrow aria-label="向左滚动"><Triangle d="M6 0L1 3.500 6 7z" /></SideArrow>
          <HThumb />
          <SideArrow aria-label="向右滚动"><Triangle d="M1 0L6 3.500 1 7z" /></SideArrow>
          <Dash $vertical />
        </HScroll>
      </SheetBar>

      <StatusBar>
        <StatusPart $gap={4}>
          <BackupDot />
          本地备份开
        </StatusPart>
        <StatusPart $gap={7}>
          <ViewButton aria-label="护眼模式"><Icon name="eye" size={16} /></ViewButton>
          <ViewButton aria-label="阅读模式" $width={40}><Icon name="move" size={16} /><Caret /></ViewButton>
          <Rule $gap={2} />
          <ViewButton aria-label="普通视图" $width={24} $on><Icon name="normal" size={16} /></ViewButton>
          <ViewButton aria-label="分页预览"><Icon name="page" size={16} /></ViewButton>
          <Rule $gap={1} />
          <ZoomLabel>
            <Select aria-label="缩放比例" $pad={10}><option>100%</option></Select>
            <Caret />
          </ZoomLabel>
          <ViewButton aria-label="缩小" $width={28}><Minus /></ViewButton>
          <ZoomRange type="range" aria-label="缩放" min={0} max={200} defaultValue={100} />
          <ViewButton aria-label="放大"><Icon name="plusBold" size={10} /></ViewButton>
          <ViewButton aria-label="全屏"><Icon name="expand" size={14} /></ViewButton>
        </StatusPart>
      </StatusBar>
      <Watermark>@稀土掘金技术社区</Watermark>
    </Window>
  );
}
